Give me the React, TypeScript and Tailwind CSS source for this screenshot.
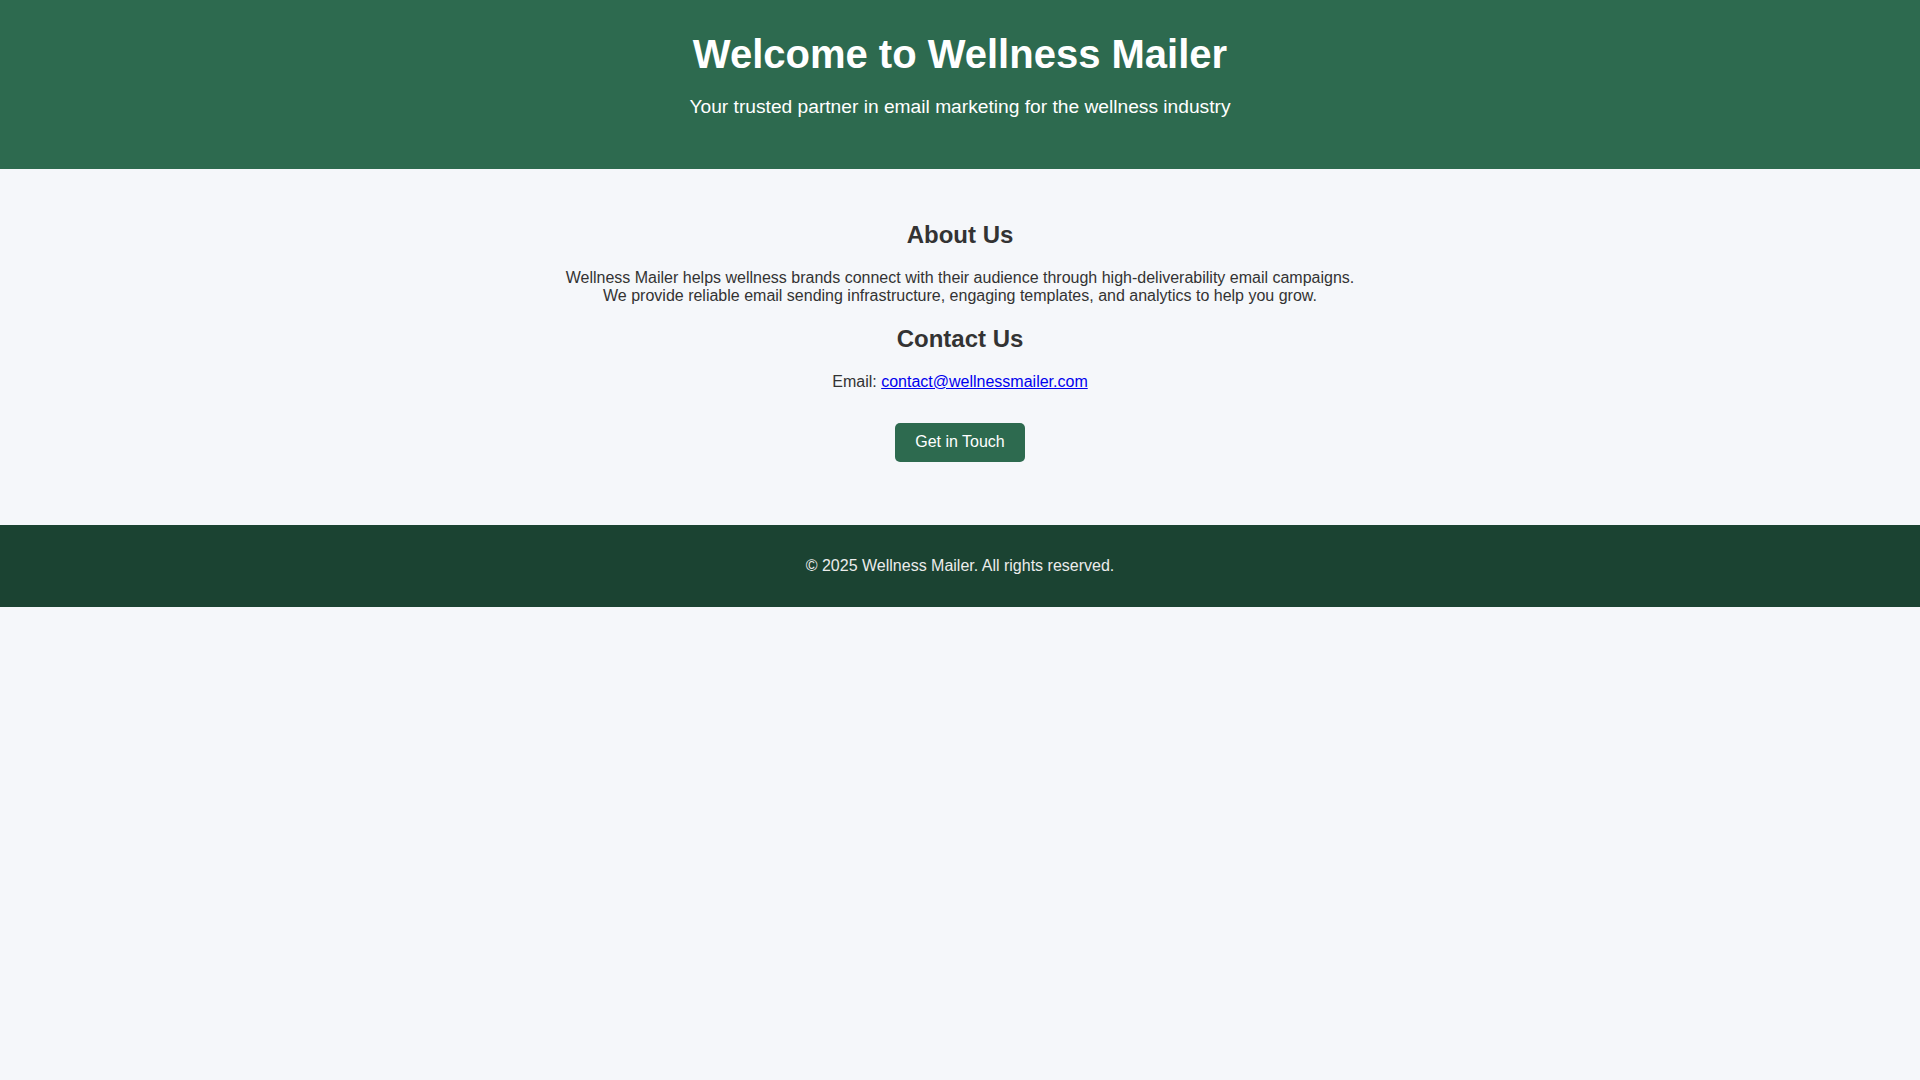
export default function App() {
  return (
    <div className="min-h-screen bg-[#f5f7fa] font-['Liberation_Sans',Arial,sans-serif] text-[#333]">
      <header className="bg-[#2d6a4f] pt-[31px] pb-[51px] text-center text-white">
        <h1 className="text-[40px] leading-[46px] font-bold">Welcome to Wellness Mailer</h1>
        <p className="mt-[19px] text-[19.2px] leading-[22px]">
          Your trusted partner in email marketing for the wellness industry
        </p>
      </header>

      <main className="flex flex-col items-center pt-[52px] pb-[63px] text-center text-base leading-[18.4px]">
        <h2 className="text-[24px] leading-[27.6px] font-bold">About Us</h2>
        <p className="mt-[20px]">
          Wellness Mailer helps wellness brands connect with their audience through high-deliverability email campaigns.
          <br />
          We provide reliable email sending infrastructure, engaging templates, and analytics to help you grow.
        </p>
        <h2 className="mt-[20px] text-[24px] leading-[27.6px] font-bold">Contact Us</h2>
        <p className="mt-[20px]">
          Email:{" "}
          <a href="#" className="text-[#0000ee] underline">
            contact@wellnessmailer.com
          </a>
        </p>
        <button className="mt-[32px] rounded-[5px] bg-[#2d6a4f] px-5 py-[10px] text-base leading-[18.4px] text-white">
          Get in Touch
        </button>
      </main>

      <footer className="bg-[#1b4332] pt-[31px] pb-[32px] text-center text-base leading-[19px] text-[#ececec]">
        <p>© 2025 Wellness Mailer. All rights reserved.</p>
      </footer>
    </div>
  );
}
